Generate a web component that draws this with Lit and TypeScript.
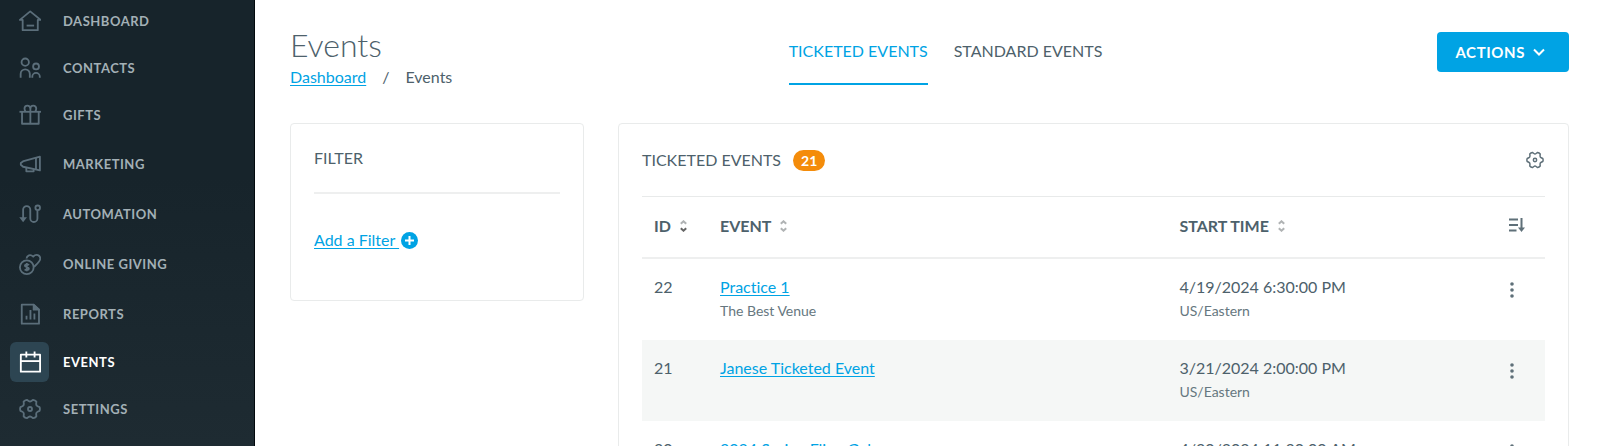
import { LitElement, html, css, svg, nothing } from "lit";
import { customElement } from "lit/decorators.js";

/** Six-lobed gear outline, centred in a 24-unit box. */
function gearOutline(): string {
  const at = (deg: number, r: number) => {
    const a = (deg * Math.PI) / 180;
    return `${(12 + r * Math.cos(a)).toFixed(2)} ${(12 + r * Math.sin(a)).toFixed(2)}`;
  };
  let d = `M${at(-11, 10.6)}`;
  for (let lobe = 0; lobe < 360; lobe += 60) {
    d += ` Q${at(lobe, 11.2)} ${at(lobe + 11, 10.6)} L${at(lobe + 20, 8.8)} Q${at(lobe + 30, 7.6)} ${at(lobe + 40, 8.8)} L${at(lobe + 49, 10.6)}`;
  }
  return d + " Z";
}

const gear = svg`<path d=${gearOutline()}/><circle cx="12" cy="12" r="2.200"/>`;

const icons: Record<string, unknown> = {
  dashboard: svg`<path d="M1 10.800 H4 V22 H20.500 V10.800 H23.500 L12.200 1.500 Z" class="roof"/><path d="M8.300 17 H16.500"/>`,
  contacts: svg`<circle cx="6.800" cy="5.600" r="4"/><path d="M1.800 22.500 V18.500 A5 5 0 0 1 11.800 18.500 V22.500"/><circle cx="18.600" cy="10.300" r="3.200"/><path d="M14.500 22.500 V21.500 A4.100 4.100 0 0 1 22.700 21.500 V22.500"/>`,
  gifts: svg`<path d="M.5 8.500 H24"/><path d="M3.300 8.500 V21.500 H21.500 V8.500"/><path d="M12.400 8 V21.500"/><path d="M12.400 8 V5 A3.200 3.200 0 0 0 6 5 C6 6.500 6.500 7.500 7.200 8"/><path d="M12.400 5 A3.200 3.200 0 0 1 18.800 5 C18.800 6.500 18.300 7.500 17.600 8"/>`,
  marketing: svg`<path d="M22.800 4 V19 L4.500 15 L2 12.800 V11 L5 8.800 Z"/><path d="M18.500 5.200 V18"/><path d="M8 15.800 V20 H16 V17.800"/>`,
  automation: svg`<path d="M4.500 17 V7.300 A3.900 3.900 0 0 1 12.300 7.300 V16.800 A3.900 3.900 0 0 0 20.100 16.800 V8"/><circle cx="20.400" cy="5.200" r="2.500"/><path class="solid" d="M.3 15.500 H8.700 L4.500 21 Z"/>`,
  giving: svg`<circle cx="8.500" cy="15.500" r="7.500"/><path d="M8.200 6 C8.500 2.500 12.500 .8 15.500 4 C18.500 .5 23.500 2 23.200 6.500 C23 9 19.500 12 16.500 15"/><path d="M10.800 13.200 C9.800 12 6.400 12 6.400 13.900 C6.400 15.800 10.800 15.100 10.800 17.200 C10.800 19 7.200 19 6.200 17.800 M8.500 11 V20"/>`,
  reports: svg`<path d="M3 1.800 H16 L21.800 7.300 V22.500 H3 Z"/><path d="M16 2 V7.300 H21.800 Z" class="fold"/><path d="M8.200 18 V14 M12.500 18 V7.500 M16.800 18 V11.500"/>`,
  events: svg`<path d="M2 4 H23 V22.500 H2 Z"/><path d="M2 11 H23"/><path d="M8 .5 V7 M17 .5 V7"/>`,
  settings: gear,
};

interface NavItem {
  icon: string;
  label: string;
  tall?: boolean;
  active?: boolean;
}

const navItems: NavItem[] = [
  { icon: "dashboard", label: "Dashboard" },
  { icon: "contacts", label: "Contacts" },
  { icon: "gifts", label: "Gifts" },
  { icon: "marketing", label: "Marketing", tall: true },
  { icon: "automation", label: "Automation", tall: true },
  { icon: "giving", label: "Online Giving", tall: true },
  { icon: "reports", label: "Reports", tall: true },
  { icon: "events", label: "Events", active: true },
  { icon: "settings", label: "Settings" },
];

const events = [
  { id: 22, name: "Practice 1", venue: "The Best Venue", start: "4/19/2024 6:30:00 PM", zone: "US/Eastern" },
  { id: 21, name: "Janese Ticketed Event", venue: "", start: "3/21/2024 2:00:00 PM", zone: "US/Eastern" },
  { id: 20, name: "2024 Spring Fling Gala", venue: "", start: "4/20/2024 11:30:00 AM", zone: "US/Eastern" },
];

@customElement("side-nav")
class SideNav extends LitElement {
  static styles = css`
    :host {
      display: block;
      box-sizing: border-box;
      background: linear-gradient(#17242b 40%, #1e2b32);
      border-right: 1px solid #02090d;
      overflow: hidden;
    }
    .menu {
      margin-top: -3px;
    }
    .item {
      display: flex;
      box-sizing: border-box;
      align-items: center;
      gap: 14px;
      height: 47px;
      padding-left: 10px;
      color: #a3b0b6;
      font-size: 13px;
      font-weight: 700;
      letter-spacing: 0.04em;
      text-transform: uppercase;
      text-decoration: none;
    }
    .tall {
      height: 50px;
      padding-top: 2px;
    }
    .tile {
      display: grid;
      place-items: center;
      width: 39px;
      height: 40px;
      border-radius: 6px;
      color: #5b6e7a;
    }
    .active {
      color: #fff;
    }
    .active .tile {
      background: #2d4552;
      color: #fff;
    }
    .icon {
      width: 22px;
      height: 22px;
      fill: none;
      stroke: currentColor;
      stroke-width: 2;
      stroke-linejoin: round;
    }
    .solid {
      fill: currentColor;
      stroke: none;
    }
    .fold {
      fill: currentColor;
    }
  `;
  render() {
    return html`<nav class="menu" aria-label="Main">
      ${navItems.map(
        (n) => html`<a
          class="item ${n.tall ? "tall" : ""} ${n.active ? "active" : ""}"
          href="#${n.icon}"
          aria-current=${n.active ? "page" : nothing}
          ><span class="tile"><svg class="icon" viewBox="0 0 24 24" aria-hidden="true">${icons[n.icon]}</svg></span
          ><span>${n.label}</span></a
        >`
      )}
    </nav>`;
  }
}

@customElement("events-table")
class EventsTable extends LitElement {
  static styles = css`
    :host {
      display: block;
    }
    .head {
      display: flex;
      align-items: center;
      height: 72px;
      border-bottom: 1px solid #e8eaea;
    }
    .title {
      margin: 0 12px 0 0;
      font-size: 16px;
      font-weight: 400;
      text-transform: uppercase;
    }
    .count {
      padding: 0 8px;
      border-radius: 11px;
      background: #f48c0a;
      color: #fff;
      font-size: 14px;
      font-weight: 700;
      line-height: 21px;
    }
    .plain {
      display: inline-grid;
      place-items: center;
      padding: 0;
      border: 0;
      background: none;
      color: #5f7079;
      font: inherit;
      cursor: pointer;
    }
    .gear {
      width: 18px;
      height: 18px;
      fill: none;
      stroke: currentColor;
      stroke-width: 2;
      stroke-linejoin: round;
    }
    .push {
      margin: 0 1px 0 auto;
    }
    .table {
      width: 100%;
      border-collapse: separate;
      border-spacing: 0;
      table-layout: fixed;
    }
    .id-col {
      width: 66px;
    }
    .start-col {
      width: 36.5%;
    }
    .menu-col {
      width: 48px;
    }
    .th {
      height: 58px;
      padding: 0 12px 2px;
      border-bottom: 2px solid #eeefef;
      font-size: 16px;
      font-weight: 700;
      text-align: left;
      text-transform: uppercase;
    }
    .sort {
      display: inline-flex;
      align-items: center;
      gap: 9px;
      text-transform: inherit;
      color: #4d616b;
    }
    .carets {
      width: 7px;
      height: 12px;
      fill: none;
      stroke: #b0b3b4;
      stroke-width: 2;
    }
    .on {
      stroke: #666;
    }
    .td {
      height: 81px;
      padding: 17px 12px 0;
      box-sizing: border-box;
      vertical-align: top;
      line-height: 22px;
    }
    .row:nth-child(even) {
      background: #f5f7f6;
    }
    .link {
      color: #00a3e4;
      text-underline-offset: 2px;
    }
    .sub {
      margin-top: 2px;
      color: #667780;
      font-size: 14px;
      line-height: 22px;
    }
    .menu {
      display: block;
      width: 4px;
      height: 16px;
      fill: currentColor;
    }
    .dots {
      padding: 6px 1px;
    }
    .order {
      width: 16px;
      height: 14px;
      fill: none;
      stroke: currentColor;
      stroke-width: 2;
    }
  `;
  private header(label: string, active = false) {
    return html`<button class="plain sort">
      ${label}<svg class="carets" viewBox="0 0 7 12" aria-hidden="true">
        <path d="M.8 3.800 L3.500 1.300 L6.200 3.800" /><path class=${active ? "on" : ""} d="M.8 8.200 L3.500 10.700 L6.200 8.200" />
      </svg>
    </button>`;
  }
  render() {
    return html`
      <header class="head">
        <h2 class="title">Ticketed Events</h2>
        <span class="count">21</span>
        <button class="plain push" aria-label="Table settings">
          <svg class="gear" viewBox="0 0 24 24" aria-hidden="true">${gear}</svg>
        </button>
      </header>
      <table class="table">
        <colgroup>
          <col class="id-col" />
          <col />
          <col class="start-col" />
          <col class="menu-col" />
        </colgroup>
        <thead>
          <tr>
            <th class="th" scope="col">${this.header("ID", true)}</th>
            <th class="th" scope="col">${this.header("Event")}</th>
            <th class="th" scope="col">${this.header("Start Time")}</th>
            <th class="th" scope="col">
              <button class="plain" aria-label="Sort order">
                <svg class="order" viewBox="0 0 16 14" aria-hidden="true">
                  <path d="M0 1.500 H9 M0 7 H9 M0 12.500 H7.500 M12.500 0 V11" />
                  <path fill="currentColor" stroke="none" d="M9 9.500 H16 L12.500 14 Z" />
                </svg>
              </button>
            </th>
          </tr>
        </thead>
        <tbody>
          ${events.map(
            (e) => html`<tr class="row">
              <td class="td">${e.id}</td>
              <td class="td">
                <a class="link" href="#event-${e.id}">${e.name}</a>
                ${e.venue ? html`<div class="sub">${e.venue}</div>` : nothing}
              </td>
              <td class="td">
                ${e.start}
                <div class="sub">${e.zone}</div>
              </td>
              <td class="td">
                <button class="plain dots" aria-label="Actions for ${e.name}">
                  <svg class="menu" viewBox="0 0 4 16" aria-hidden="true">
                    <circle cx="2" cy="2" r="1.800" /><circle cx="2" cy="8" r="1.800" /><circle cx="2" cy="14" r="1.800" />
                  </svg>
                </button>
              </td>
            </tr>`
          )}
        </tbody>
      </table>
    `;
  }
}

@customElement("app-root")
class AppRoot extends LitElement {
  static styles = css`
    :host {
      display: grid;
      grid-template-columns: 255px minmax(0, 1fr);
      height: 100vh;
      overflow: hidden;
      background: #fff;
      color: #4d616b;
      font-family: Lato, "Liberation Sans", sans-serif;
      font-size: 16px;
      font-variant-ligatures: none;
      line-height: 22px;
    }
    .main {
      padding: 32px 31px 0 35px;
      overflow: hidden;
    }
    .top {
      display: grid;
      grid-template-columns: minmax(0, 1fr) auto minmax(0, 1fr);
      align-items: start;
      height: 91px;
    }
    .heading {
      margin: 0;
      font-size: 32px;
      font-weight: 300;
      line-height: 26px;
    }
    .crumbs {
      display: flex;
      gap: 16px;
      margin-top: 8px;
    }
    .link {
      color: #00a3e4;
      text-underline-offset: 2px;
    }
    .tabs {
      display: flex;
      gap: 26px;
      padding: 8px 0 0 32px;
    }
    .tab {
      height: 43px;
      color: inherit;
      text-decoration: none;
      text-transform: uppercase;
    }
    .current {
      border-bottom: 2px solid #00a3e4;
      color: #00a3e4;
    }
    .actions {
      display: flex;
      align-items: center;
      justify-self: end;
      gap: 8px;
      height: 40px;
      padding: 0 24px 0 18px;
      border: 0;
      border-radius: 4px;
      background: #00a3e4;
      color: #fff;
      font: 700 15px Lato, "Liberation Sans", sans-serif;
      letter-spacing: 0.04em;
    }
    .chevron {
      width: 12px;
      height: 8px;
      fill: none;
      stroke: currentColor;
      stroke-width: 2;
    }
    .columns {
      display: flex;
      align-items: flex-start;
      gap: 34px;
    }
    .card {
      box-sizing: border-box;
      border: 1px solid #e9ebeb;
      border-radius: 4px;
      padding: 0 23px;
    }
    .filter {
      flex: 0 0 294px;
      padding-bottom: 49px;
    }
    .list {
      flex: 1;
      min-width: 0;
    }
    .title {
      margin: 0 0 35px;
      padding: 23px 0;
      border-bottom: 2px solid #eeefef;
      font-size: 16px;
      font-weight: 400;
      text-transform: uppercase;
    }
    .add {
      display: flex;
      align-items: center;
      gap: 2px;
    }
    .plus {
      width: 17px;
      height: 17px;
      fill: #00a3e4;
    }
    .cross {
      fill: none;
      stroke: #fff;
      stroke-width: 2;
    }
  `;
  render() {
    return html`
      <side-nav></side-nav>
      <main class="main">
        <header class="top">
          <div>
            <h1 class="heading">Events</h1>
            <nav class="crumbs" aria-label="Breadcrumb">
              <a class="link" href="#dashboard">Dashboard</a><span>/</span><span>Events</span>
            </nav>
          </div>
          <nav class="tabs" aria-label="Event type">
            <a class="tab current" href="#ticketed" aria-current="page">Ticketed Events</a>
            <a class="tab" href="#standard">Standard Events</a>
          </nav>
          <button class="actions">
            ACTIONS<svg class="chevron" viewBox="0 0 12 8" aria-hidden="true"><path d="M1 1.500 L6 6.500 L11 1.500" /></svg>
          </button>
        </header>
        <div class="columns">
          <section class="card filter">
            <h2 class="title">Filter</h2>
            <a class="link add" href="#add-filter"
              ><span>Add a Filter&nbsp;</span
              ><svg class="plus" viewBox="0 0 17 17" aria-hidden="true">
                <circle cx="8.500" cy="8.500" r="8.500" /><path class="cross" d="M8.500 4 V13 M4 8.500 H13" /></svg
            ></a>
          </section>
          <section class="card list"><events-table></events-table></section>
        </div>
      </main>
    `;
  }
}
